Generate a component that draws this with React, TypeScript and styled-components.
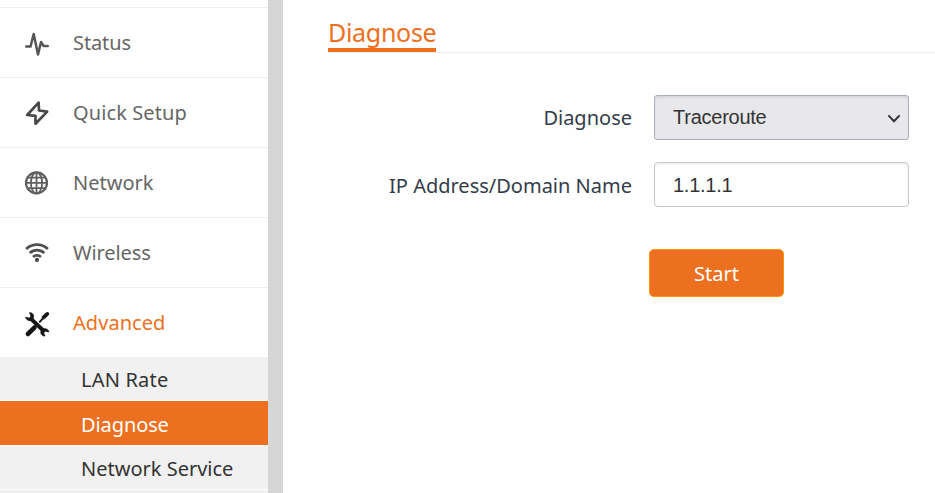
import React from 'react';
import styled, { createGlobalStyle } from 'styled-components';

const ORANGE = '#ed7020';

const GlobalStyle = createGlobalStyle`
  * { box-sizing: border-box; }
  body { margin: 0; background: #fff; overflow: hidden; }
  button, input, select { font: inherit; margin: 0; }
`;

const Page = styled.div`
  display: flex;
  width: 100%;
  height: 493px;
  overflow: hidden;
  font-family: 'Noto Sans', 'Open Sans', sans-serif;
  font-size: 20px;
  white-space: nowrap;
`;

const Sidebar = styled.nav`
  flex: 0 0 283px;
  border-right: 15px solid #d6d6d6;
  padding-top: 7px;
  overflow: hidden;
`;

const MenuItem = styled.a<{ $active?: boolean; $spacing: number }>`
  display: flex;
  align-items: center;
  height: 70px;
  padding-left: 21px;
  gap: 20px;
  border-top: 1px solid #f0f0f0;
  color: ${(p) => (p.$active ? ORANGE : '#666')};
  letter-spacing: ${(p) => p.$spacing}px;
`;

const IconBox = styled.svg`
  flex: none;
  width: 32px;
  height: 32px;
  margin-top: 3px;
  overflow: visible;
`;

const SubMenu = styled.div`
  display: flex;
  flex-direction: column;
  gap: 1px;
`;

const SubItem = styled.a<{ $active?: boolean; $height: number; $spacing?: number }>`
  flex: none;
  height: ${(p) => p.$height}px;
  line-height: ${(p) => (p.$active ? 47 : 46)}px;
  padding-left: 81px;
  background: ${(p) => (p.$active ? ORANGE : '#f1f1f1')};
  color: ${(p) => (p.$active ? '#fff' : '#333')};
  letter-spacing: ${(p) => p.$spacing ?? 0}px;
`;

const Content = styled.main`
  flex: 1;
  min-width: 0;
`;

const TitleBar = styled.header`
  display: flex;
  height: 53px;
  margin-left: 45px;
  border-bottom: 1px solid #ececec;
`;

const Title = styled.h1`
  margin: 0;
  width: 108px;
  height: 52px;
  padding-top: 14px;
  border-bottom: 4px solid ${ORANGE};
  color: ${ORANGE};
  font-size: 25px;
  font-weight: 400;
  line-height: 36px;
  letter-spacing: -0.3px;
`;

const Form = styled.form`
  padding-top: 42px;
`;

const Field = styled.div`
  display: grid;
  grid-template-columns: 349px 255px;
  column-gap: 22px;
  align-items: center;
  height: 45px;
  margin-bottom: 22px;
`;

const Label = styled.label<{ $drop?: number }>`
  padding-top: ${(p) => p.$drop ?? 0}px;
  text-align: right;
  color: #333c4a;
`;

const SelectBox = styled.div`
  display: grid;
  align-items: center;
  height: 45px;

  > * { grid-area: 1 / 1; }
`;

const Select = styled.select`
  appearance: none;
  width: 255px;
  height: 45px;
  padding: 0 18px 1px;
  border: 1px solid #a7b1bc;
  border-radius: 3px;
  background: #e8e7ec;
  box-shadow: inset 0 2px 2px rgba(0, 0, 0, 0.07);
  color: #333;
  font-family: 'Liberation Sans', Arial, sans-serif;
  font-size: 20px;
  letter-spacing: -0.25px;
`;

const Chevron = styled.svg`
  justify-self: end;
  width: 14px;
  height: 9px;
  margin: 2px 8px 0 0;
  pointer-events: none;
`;

const Input = styled.input`
  width: 255px;
  height: 45px;
  padding: 2px 18px 0;
  border: 1px solid #c9c9c9;
  border-radius: 4px;
  background: #fff;
  box-shadow: inset 0 2px 2px rgba(0, 0, 0, 0.06);
  color: #333;
  font-family: 'Liberation Sans', Arial, sans-serif;
  font-size: 20px;
  letter-spacing: -0.25px;
  outline: none;
`;

const StartButton = styled.button`
  display: block;
  width: 135px;
  height: 48px;
  margin: 42px 0 0 366px;
  padding: 0;
  border: 1px solid #ff9600;
  border-radius: 5px;
  background: ${ORANGE};
  color: #fff;
`;

const StatusIcon = () => (
  <IconBox viewBox="0 0 32 32" fill="none" stroke="#555" strokeWidth="2.5" strokeLinejoin="round" strokeLinecap="round">
    <path d="M5.2 18.6H9.5L12.7 6L17 26.5L20 14L22.6 18H26.7" />
  </IconBox>
);

const QuickIcon = () => (
  <IconBox viewBox="0 0 32 32" fill="none" stroke="#484848" strokeWidth="2.7" strokeLinejoin="round">
    <path d="M17.6 4.6L6.2 17L14.5 17.9V25.7L26.2 13.6L18 12.5Z" />
  </IconBox>
);

const GlobeIcon = () => (
  <IconBox viewBox="0 0 32 32" fill="none" stroke="#606060" strokeWidth="1.8">
    <circle cx="15.5" cy="14.9" r="10.5" strokeWidth="2.2" />
    <ellipse cx="15.5" cy="14.9" rx="5.6" ry="10.5" />
    <path d="M15.5 4.5V25.4M5 14.9H26M6.5 9.7H24.5M6.5 20.1H24.5" />
  </IconBox>
);

const WifiIcon = () => (
  <IconBox viewBox="0 0 32 32" fill="none" stroke="#505050" strokeWidth="2.7">
    <path d="M5.1 10.9C11.4 5.2 20.6 5.2 26.9 10.9M8.7 15.1C13 11.2 19 11.2 23.3 15.1M12 18.9C14.2 16.9 17.8 16.9 20 18.9" />
    <circle cx="16" cy="21.9" r="2.1" fill="#484848" stroke="none" />
  </IconBox>
);

const ToolsIcon = () => (
  <IconBox viewBox="0 0 32 32" fill="none" stroke="#151515">
    <path d="M10 10.9L22 22.3" strokeWidth="4" />
    <path d="M8.6 4.7C12 4.5 13.6 7.9 11.9 10.6C10.2 13.4 5.6 13.1 4.7 9.3L8.1 10.2L10 8.2Z" fill="#151515" strokeWidth="0.9" strokeLinejoin="round" />
    <path d="M24 28C20.5 27.9 18.8 24.9 20.5 22.3C22.3 19.8 27.1 20.3 27.8 23.9L24.5 23L22.5 25Z" fill="#151515" strokeWidth="0.9" strokeLinejoin="round" />
    <path d="M18.3 14.3L23.3 8.8" strokeWidth="1.9" />
    <path d="M22.6 9.4L26.3 5.9" strokeWidth="3.8" strokeLinecap="round" />
    <path d="M7 25.9L13.4 19.6" strokeWidth="4.7" strokeLinecap="round" />
  </IconBox>
);

const MENU = [
  { label: 'Status', Icon: StatusIcon, spacing: -0.1 },
  { label: 'Quick Setup', Icon: QuickIcon, spacing: 0.1 },
  { label: 'Network', Icon: GlobeIcon, spacing: 0 },
  { label: 'Wireless', Icon: WifiIcon, spacing: -0.1 },
  { label: 'Advanced', Icon: ToolsIcon, spacing: 0.05, active: true },
];

export default function App() {
  return (
    <Page>
      <GlobalStyle />
      <Sidebar>
        {MENU.map(({ label, Icon, spacing, active }) => (
          <MenuItem key={label} $active={active} $spacing={spacing}>
            <Icon />
            <span>{label}</span>
          </MenuItem>
        ))}
        <SubMenu>
          <SubItem $height={43} $spacing={0.2}>LAN Rate</SubItem>
          <SubItem $height={44} $spacing={-0.1} $active>Diagnose</SubItem>
          <SubItem $height={43}>Network Service</SubItem>
          <SubItem $height={43} />
        </SubMenu>
      </Sidebar>
      <Content>
        <TitleBar>
          <Title>Diagnose</Title>
        </TitleBar>
        <Form onSubmit={(e) => e.preventDefault()}>
          <Field>
            <Label htmlFor="mode">Diagnose</Label>
            <SelectBox>
              <Select id="mode" defaultValue="Traceroute">
                <option>Traceroute</option>
              </Select>
              <Chevron viewBox="0 0 14 9" fill="none" stroke="#333" strokeWidth="2">
                <path d="M1.4 1.4L7 7.2L12.6 1.4" />
              </Chevron>
            </SelectBox>
          </Field>
          <Field>
            <Label htmlFor="host" $drop={2}>IP Address/Domain Name</Label>
            <Input id="host" defaultValue="1.1.1.1" />
          </Field>
          <StartButton type="submit">Start</StartButton>
        </Form>
      </Content>
    </Page>
  );
}
